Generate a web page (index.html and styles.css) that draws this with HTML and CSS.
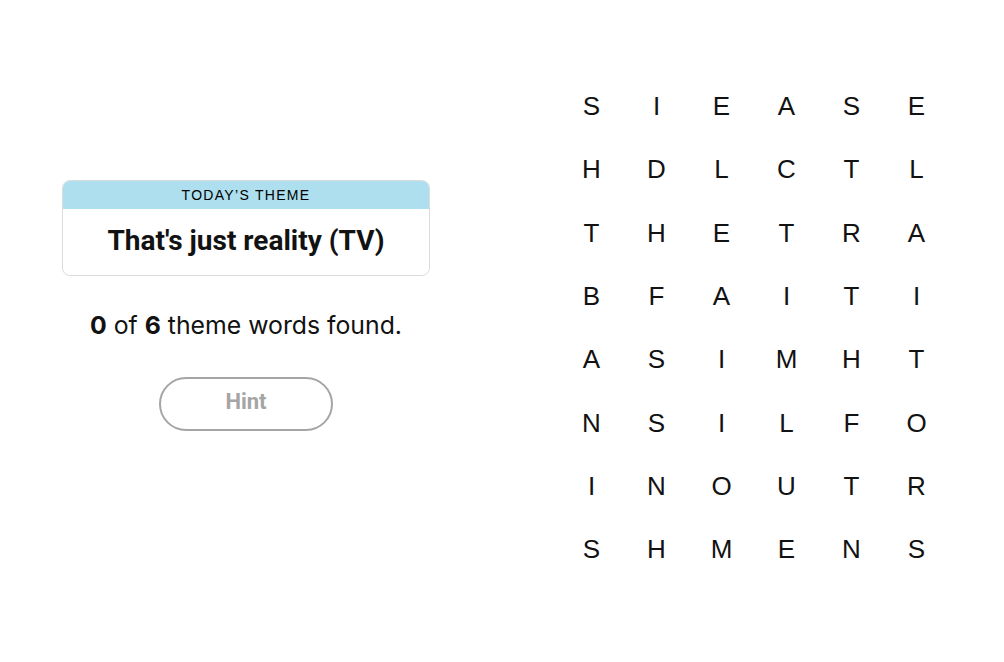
FILE: index.html
```html
<!DOCTYPE html>
<html>
<head>
<meta charset="utf-8">
<link rel="stylesheet" href="styles.css">
</head>
<body>
<div class="page">
  <section class="left">
    <div class="card">
      <div class="card-head">Today’s Theme</div>
      <div class="card-body">That's just reality (TV)</div>
    </div>
    <p class="progress"><b>0</b> of <b>6</b> theme words found.</p>
    <button class="hint">Hint</button>
  </section>
  <section class="board">
    <span>S</span><span>I</span><span>E</span><span>A</span><span>S</span><span>E</span>
    <span>H</span><span>D</span><span>L</span><span>C</span><span>T</span><span>L</span>
    <span>T</span><span>H</span><span>E</span><span>T</span><span>R</span><span>A</span>
    <span>B</span><span>F</span><span>A</span><span>I</span><span>T</span><span>I</span>
    <span>A</span><span>S</span><span>I</span><span>M</span><span>H</span><span>T</span>
    <span>N</span><span>S</span><span>I</span><span>L</span><span>F</span><span>O</span>
    <span>I</span><span>N</span><span>O</span><span>U</span><span>T</span><span>R</span>
    <span>S</span><span>H</span><span>M</span><span>E</span><span>N</span><span>S</span>
  </section>
</div>
</body>
</html>
```
FILE: styles.css
```css
html, body {
  margin: 0;
  padding: 0;
  background: #fff;
  font-family: "Liberation Sans", Arial, sans-serif;
  color: #121212;
}
.page {
  display: flex;
  width: 1004px;
  height: 662px;
}
.left {
  width: 492px;
  padding-top: 180px;
  display: flex;
  flex-direction: column;
  align-items: center;
}
.card {
  width: 366px;
  border: 1px solid #dcdcdc;
  border-radius: 8px;
  overflow: hidden;
}
.card-head {
  height: 28px;
  line-height: 28px;
  background: #addfee;
  text-align: center;
  text-transform: uppercase;
  font-size: 14px;
  letter-spacing: 1.3px;
  font-weight: 500;
  color: #000;
}
.card-body {
  height: 66px;
  line-height: 64px;
  text-align: center;
  font-family: Roboto, "Liberation Sans", sans-serif;
  font-size: 28px;
  font-weight: bold;
}
.progress {
  margin: 33px 0 0;
  font-family: Inter, "Liberation Sans", sans-serif;
  font-size: 24.8px;
  line-height: 32px;
  text-align: center;
}
.progress b {
  font-weight: 700;
}
.hint {
  margin-top: 36px;
  width: 174px;
  height: 54px;
  border: 2px solid #a5a5a5;
  border-radius: 27px;
  background: #fff;
  color: #a5a5a5;
  font-family: Roboto, "Liberation Sans", Arial, sans-serif;
  font-weight: bold;
  font-size: 22px;
  padding: 0 0 6px;
}
.board {
  margin-left: 67px;
  padding-top: 75px;
  display: grid;
  grid-template-columns: repeat(6, 65px);
  grid-auto-rows: 63.3px;
  align-content: start;
}
.board span {
  display: flex;
  align-items: center;
  justify-content: center;
  font-size: 26px;
}
```
